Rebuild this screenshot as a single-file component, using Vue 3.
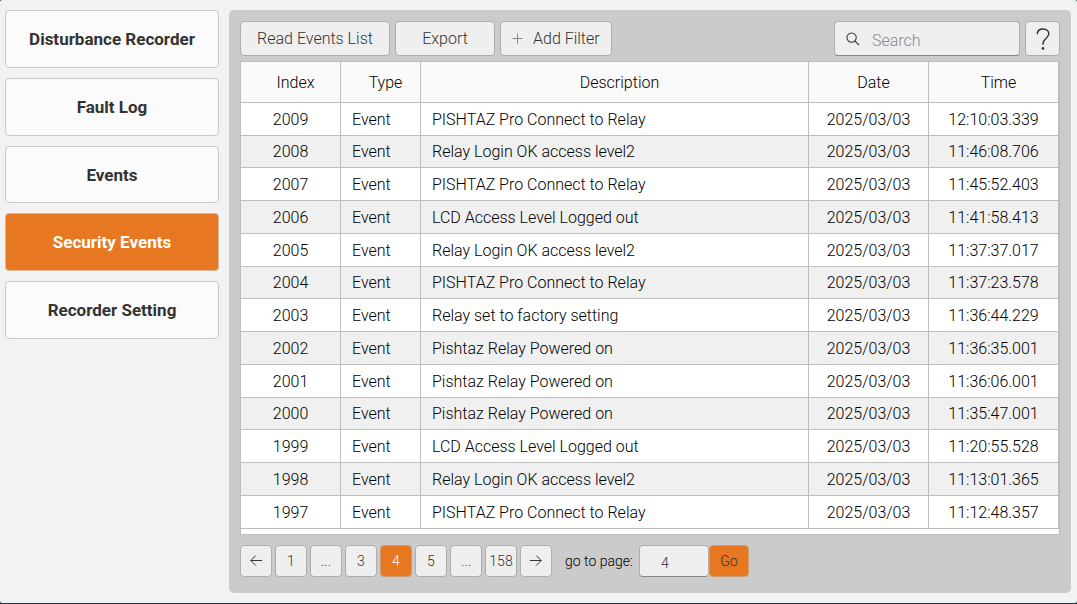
<script setup>
import { ref } from 'vue'

const sections = ['Disturbance Recorder', 'Fault Log', 'Events', 'Security Events', 'Recorder Setting']
const activeSection = ref('Security Events')

const date = '2025/03/03'
const connect = 'PISHTAZ Pro Connect to Relay'
const login = 'Relay Login OK access level2'
const logout = 'LCD Access Level Logged out'
const powered = 'Pishtaz Relay Powered on'

const rows = [
  { index: 2009, text: connect, time: '12:10:03.339' },
  { index: 2008, text: login, time: '11:46:08.706' },
  { index: 2007, text: connect, time: '11:45:52.403' },
  { index: 2006, text: logout, time: '11:41:58.413' },
  { index: 2005, text: login, time: '11:37:37.017' },
  { index: 2004, text: connect, time: '11:37:23.578' },
  { index: 2003, text: 'Relay set to factory setting', time: '11:36:44.229' },
  { index: 2002, text: powered, time: '11:36:35.001' },
  { index: 2001, text: powered, time: '11:36:06.001' },
  { index: 2000, text: powered, time: '11:35:47.001' },
  { index: 1999, text: logout, time: '11:20:55.528' },
  { index: 1998, text: login, time: '11:13:01.365' },
  { index: 1997, text: connect, time: '11:12:48.357' },
]

const pages = ['1', '...', '3', '4', '5', '...', '158']
const currentPage = ref('4')
const targetPage = ref('4')
const query = ref('')
</script>

<template>
  <div class="page">
    <nav class="sidebar">
      <button
        v-for="s in sections"
        :key="s"
        type="button"
        class="section"
        :class="{ active: s === activeSection }"
        @click="activeSection = s"
      >{{ s }}</button>
    </nav>

    <main class="panel">
      <div class="toolbar">
        <button type="button" class="tool read">Read Events List</button>
        <button type="button" class="tool export">Export</button>
        <button type="button" class="tool filter">
          <svg width="11" height="11" viewBox="0 0 11 11" aria-hidden="true">
            <path d="M5.5 0.5V10.5M0.5 5.5H10.5" fill="none" stroke="#888" />
          </svg>
          Add Filter
        </button>
        <label class="search">
          <svg width="14" height="14" viewBox="0 0 15 15" aria-hidden="true">
            <circle cx="6" cy="6" r="5" fill="none" stroke="#333" stroke-width="1.1" />
            <path d="M9.5 9.5L14 14" fill="none" stroke="#333" stroke-width="1.3" />
          </svg>
          <input v-model="query" type="text" placeholder="Search" aria-label="Search" />
        </label>
        <button type="button" class="tool help" aria-label="Help">
          <svg width="14" height="22" viewBox="0 0 14 22" aria-hidden="true">
            <path d="M1.2 6.2C1.2 3 3.6 1 7 1S12.8 3 12.8 5.8C12.8 10.2 7 10.8 7 15.5V16.8" fill="none" stroke="#333" stroke-width="1.4" />
            <circle cx="7" cy="20.4" r="1.3" fill="#333" />
          </svg>
        </button>
      </div>

      <div class="grid">
        <table>
          <colgroup>
            <col class="c-index" /><col class="c-type" /><col /><col class="c-date" /><col class="c-time" />
          </colgroup>
          <thead>
            <tr><th>Index</th><th>Type</th><th>Description</th><th>Date</th><th>Time</th></tr>
          </thead>
          <tbody>
            <tr v-for="r in rows" :key="r.index">
              <td>{{ r.index }}</td>
              <td class="left">Event</td>
              <td class="left">{{ r.text }}</td>
              <td>{{ date }}</td>
              <td>{{ r.time }}</td>
            </tr>
          </tbody>
        </table>
      </div>

      <div class="pager">
        <button type="button" class="num" aria-label="Previous page">
          <svg width="12" height="12" viewBox="0 0 12 12" aria-hidden="true">
            <path d="M12 5.5H0.8M5.8 0.5L0.8 5.5L5.8 10.5" fill="none" stroke="#333" />
          </svg>
        </button>
        <button
          v-for="(p, i) in pages"
          :key="i"
          type="button"
          class="num"
          :class="{ active: p === currentPage }"
        >{{ p }}</button>
        <button type="button" class="num" aria-label="Next page">
          <svg width="12" height="12" viewBox="0 0 12 12" aria-hidden="true">
            <path d="M0 5.5H11.2M6.2 0.5L11.2 5.5L6.2 10.5" fill="none" stroke="#333" />
          </svg>
        </button>
        <label for="target" class="goto">go to page:</label>
        <input id="target" v-model="targetPage" type="text" class="target" />
        <button type="button" class="go">Go</button>
      </div>
    </main>
  </div>
</template>

<style>
body {
  margin: 0;
  background: #22313c;
}
</style>

<style scoped>
.page {
  box-sizing: border-box;
  display: flex;
  gap: 10px;
  min-height: calc(100vh - 1px);
  padding: 10px 6px 10px 5px;
  background: #f2f2f2;
  border-radius: 2px;
  font-family: Roboto, "Liberation Sans", sans-serif;
  font-weight: 300;
  font-size: 16px;
  color: #000;
}

button,
input {
  box-sizing: border-box;
  margin: 0;
  font: inherit;
  color: #333;
}

.sidebar {
  display: flex;
  flex: 0 0 214px;
  flex-direction: column;
  gap: 10px;
}

.section {
  height: 58px;
  border: 1px solid #c9c9c9;
  border-radius: 4px;
  background: #fbfbfb;
  font-size: 17px;
  font-weight: 700;
}

.section:nth-child(3) {
  height: 57px;
}

.section.active {
  border-color: #d9b697;
  background: #e87722;
  color: #fff;
}

.panel {
  flex: 1;
  min-width: 0;
  padding: 11px 11px 16px;
  border-radius: 5px;
  background: #cbcbcb;
  display: flex;
  flex-direction: column;
}

.toolbar {
  display: flex;
  gap: 5px;
  margin-bottom: 5px;
}

.tool {
  height: 35px;
  padding: 0;
  border: 1px solid #adadad;
  border-radius: 4px;
  background: #efefef;
}

.read {
  width: 150px;
}

.export {
  width: 100px;
}

.filter {
  display: flex;
  align-items: center;
  gap: 10px;
  width: 112px;
  padding-left: 11px;
}

.search {
  box-sizing: border-box;
  display: flex;
  align-items: center;
  gap: 12px;
  width: 186px;
  margin-left: auto;
  padding-left: 11px;
  border: 1px solid #adadad;
  border-bottom-color: #868686;
  border-radius: 4px;
  background: #efefef;
}

.search input {
  flex: 1;
  min-width: 0;
  padding: 3px 0 0;
  border: 0;
  outline: 0;
  background: transparent;
}

.search input::placeholder {
  color: #888;
  opacity: 1;
}

.help {
  display: flex;
  align-items: center;
  justify-content: center;
  width: 35px;
}

.grid {
  flex: 1;
  border: 1px solid #bdbdbd;
  background: #fff;
}

table {
  width: 100%;
  border-collapse: separate;
  border-spacing: 0;
  table-layout: fixed;
}

.c-index {
  width: 100px;
}

.c-type {
  width: 80px;
}

.c-date {
  width: 120px;
}

.c-time {
  width: 130px;
}

th,
td {
  box-sizing: border-box;
  height: 33px;
  padding: 0;
  border-right: 1px solid #bdbdbd;
  border-bottom: 1px solid #bdbdbd;
  text-align: center;
  white-space: nowrap;
}

th {
  height: 41px;
  padding-left: 10px;
  background: #fafafa;
  font-weight: 300;
}

tbody tr:nth-child(even) {
  background: #f0f0f0;
}

tbody tr:nth-child(4n + 2) td {
  height: 32px;
}

td.left {
  padding-left: 11px;
  text-align: left;
}

.pager {
  display: flex;
  align-items: center;
  margin-top: 10px;
  font-size: 14px;
}

.num {
  display: flex;
  align-items: center;
  justify-content: center;
  width: 32px;
  height: 32px;
  margin-right: 3px;
  padding: 0;
  border: 1px solid #adadad;
  border-radius: 4px;
  background: #efefef;
}

.num.active {
  border-color: #c99c76;
  background: #e87722;
  color: #fff;
}

.goto {
  width: 74px;
  margin-left: 10px;
  white-space: nowrap;
}

.target {
  width: 70px;
  height: 32px;
  padding: 3px 0 0 21px;
  border: 1px solid #adadad;
  border-bottom-color: #868686;
  border-radius: 4px;
  outline: 0;
  background: #efefef;
}

.go {
  width: 40px;
  height: 32px;
  padding: 0;
  border: 1px solid #c99c76;
  border-radius: 4px;
  background: #e87722;
}
</style>
